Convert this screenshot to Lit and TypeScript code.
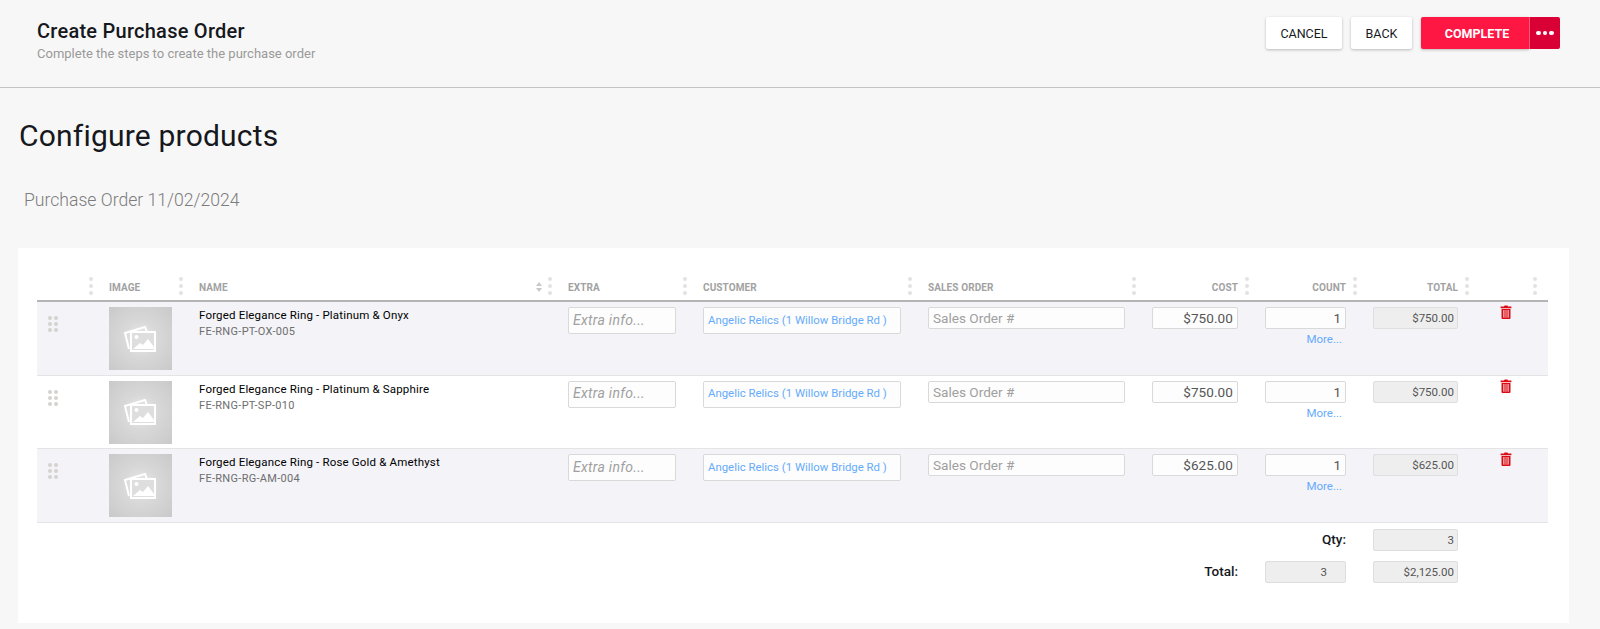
import { LitElement, html, css, svg } from "lit";
import { customElement } from "lit/decorators.js";

const rows = [
  { name: "Forged Elegance Ring - Platinum & Onyx", sku: "FE-RNG-PT-OX-005", cost: "$750.00" },
  { name: "Forged Elegance Ring - Platinum & Sapphire", sku: "FE-RNG-PT-SP-010", cost: "$750.00" },
  { name: "Forged Elegance Ring - Rose Gold & Amethyst", sku: "FE-RNG-RG-AM-004", cost: "$625.00" },
];

const photoIcon = svg`<svg class="photo" viewBox="0 0 34 30" width="34" height="30" fill="none" stroke="#fff" stroke-width="2">
  <path d="M6 25 2 9l20-6 2 5"/>
  <rect x="8" y="8" width="24" height="19" fill="#dedede"/>
  <circle cx="13.5" cy="13" r="2" fill="#fff" stroke="none"/>
  <path d="M10 25l7-6 3 2 5-6 6 8v2z" fill="#fff" stroke="none"/>
</svg>`;

const trashIcon = svg`<svg viewBox="0 0 12 14" width="12" height="14">
  <path d="M4 1.6 4.6.6h2.8L8 1.6h3.4v1.6H.6V1.6z" fill="#dd0a14"/>
  <path d="M1.5 4h9v9a1 1 0 0 1-1 1h-7a1 1 0 0 1-1-1z" fill="#dd0a14"/>
  <path d="M3 5h6v7.6H3z" fill="#ec9a9e"/>
  <path d="M4.6 5h.8v7.6h-.8zM6.6 5h.8v7.6h-.8z" fill="#dd0a14"/>
</svg>`;

const heads: [string, string][] = [
  ["", ""], ["IMAGE", ""], ["NAME", "sortable"], ["EXTRA", ""], ["CUSTOMER", ""],
  ["SALES ORDER", ""], ["COST", "r"], ["COUNT", "r"], ["TOTAL", "r"], ["", "last"],
];

@customElement("app-root")
export class AppRoot extends LitElement {
  static styles = css`
    :host { display: block; min-height: 629px; background: #f7f7f7; font-family: Roboto, "Liberation Sans", sans-serif; color: #16181d; overflow: hidden; }
    * { box-sizing: border-box; }
    .top { height: 88px; border-bottom: 1px solid #c4c4c4; padding: 17px 40px 0 37px; display: flex; justify-content: space-between; align-items: flex-start; }
    .title { font-size: 20px; font-weight: 500; line-height: 26px; letter-spacing: 0.25px; margin-top: 1px; }
    .sub { font-size: 13px; line-height: 16px; color: #9a9a9a; margin-top: 2px; }
    .actions { display: flex; }
    .btn { height: 32px; display: flex; align-items: center; justify-content: center; background: #fff; font-size: 12.5px; font-weight: 400; border-radius: 2px; box-shadow: 0 1px 3px rgba(0,0,0,.25); margin-right: 9px; }
    .cancel { width: 76px; }
    .back { width: 61px; }
    .complete { width: 108px; background: #ff1744; color: #fff; font-weight: 700; margin-right: 0; border-radius: 2px 0 0 2px; padding-left: 4px; }
    .more { width: 31px; background: #d90035; margin-right: 0; border-radius: 0 2px 2px 0; gap: 2px; border-left: 1px solid #ff5a78; box-shadow: none; }
    .more i { width: 4.5px; height: 4.5px; border-radius: 50%; background: #fff; }
    h1 { font-size: 30px; font-weight: 400; line-height: 40px; margin: 28px 0 0 19px; letter-spacing: 0.2px; }
    h2 { font-size: 17.6px; font-weight: 300; line-height: 24px; color: #7c7c7c; margin: 32px 0 0 24px; }
    .card { margin: 36px 31px 0 18px; height: 375px; background: #fff; padding: 27px 21px 0 19px; }
    .grid { display: grid; grid-template-columns: 72px 90px 369px 135px 225px 224px 113px 108px 112px 63px; }
    .head { height: 27px; border-bottom: 2px solid #b4b4b4; }
    .hc { position: relative; font-size: 10px; font-weight: 700; color: #a2a2a2; line-height: 14px; padding-top: 6px; letter-spacing: 0.1px; }
    .hc.r { text-align: right; padding-right: 27px; }
    .grip { position: absolute; right: 16px; top: 2px; display: flex; flex-direction: column; gap: 3px; }
    .grip i { width: 4px; height: 4px; border-radius: 50%; background: #e2e2e2; }
    .hc.last .grip { right: 11px; }
    .sort { position: absolute; right: 26px; top: 7px; display: flex; flex-direction: column; gap: 2px; }
    .sort i { width: 0; height: 0; border-left: 3px solid transparent; border-right: 3px solid transparent; }
    .sort i:first-child { border-bottom: 4px solid #c8c8c8; }
    .sort i:last-child { border-top: 4px solid #c8c8c8; }
    .row { height: 73.5px; border-bottom: 1px solid #e4e4e4; padding-top: 5px; }
    .row.odd { background: #f3f3f8; }
    .drag { display: grid; grid-template-columns: 4px 4px; gap: 2px; width: 10px; margin: 9px 0 0 11px; align-content: start; }
    .drag i { width: 4px; height: 4px; border-radius: 50%; background: #d4d3d0; }
    .thumb { width: 63px; height: 63px; background: radial-gradient(circle, #ebebeb 0%, #d8d8d8 40%, #c9c9c9 100%); display: flex; align-items: center; justify-content: center; padding-right: 2px; }
    .name { font-size: 11.5px; font-weight: 400; color: #000; line-height: 16px; letter-spacing: 0.17px; }
    .sku { font-size: 11px; line-height: 16px; color: #6e6e6e; letter-spacing: 0.3px; margin-top: 1px; }
    .box { background: #fdfdfd; border: 1px solid #d9d9d9; border-radius: 2px; display: flex; align-items: center; font-size: 14px; padding: 0 4px; white-space: nowrap; }
    .tall { height: 27px; }
    .short { height: 22px; }
    .extra { width: 108px; color: #a0a0a0; font-style: italic; letter-spacing: 0.3px; padding-bottom: 2px; }
    .cust { width: 198px; color: #66abfb; font-size: 11.4px; padding-bottom: 2px; }
    .sales { width: 197px; color: #a0a0a0; font-size: 13.6px; }
    .cost { width: 86px; justify-content: flex-end; color: #555; font-size: 13.5px; letter-spacing: 0.1px; }
    .count { width: 81px; justify-content: flex-end; color: #555; font-size: 13.5px; }
    .link { width: 81px; text-align: right; font-size: 11.5px; line-height: 14px; color: #66abfb; margin-top: 3px; padding-right: 4px; }
    .ro { width: 85px; background: #eee; justify-content: flex-end; font-size: 11.5px; color: #555; padding-right: 3px; border-color: #dedede; }
    .del { padding: 0 0 0 15px; margin-top: -3px; }
    .foot { height: 38px; padding-top: 6px; }
    .foot.b { height: 33px; padding-top: 0; }
    .lab { font-size: 13.5px; font-weight: 500; text-align: right; line-height: 20px; }
    .lab.qty { grid-column: 8; padding-right: 27px; }
    .lab.tot { grid-column: 7; padding-right: 27px; }
    .ro.c { width: 81px; padding-right: 18px; }
  `;

  private dots(n: number, cls: string) {
    return html`<span class=${cls}>${Array.from({ length: n }, () => html`<i></i>`)}</span>`;
  }

  render() {
    return html`
      <div class="top">
        <div>
          <div class="title">Create Purchase Order</div>
          <div class="sub">Complete the steps to create the purchase order</div>
        </div>
        <div class="actions">
          <div class="btn cancel">CANCEL</div>
          <div class="btn back">BACK</div>
          <div class="btn complete">COMPLETE</div>
          <div class="btn more"><i></i><i></i><i></i></div>
        </div>
      </div>
      <h1>Configure products</h1>
      <h2>Purchase Order 11/02/2024</h2>
      <div class="card">
        <div class="grid head">
          ${heads.map(([t, k]) => html`<div class="hc ${k}">${t}
            ${k === "sortable" ? html`<span class="sort"><i></i><i></i></span>` : ""}
            ${this.dots(3, "grip")}</div>`)}
        </div>
        ${rows.map((r, i) => html`
          <div class="grid row ${i % 2 === 0 ? "odd" : ""}">
            <div>${this.dots(6, "drag")}</div>
            <div class="thumb">${photoIcon}</div>
            <div><div class="name">${r.name}</div><div class="sku">${r.sku}</div></div>
            <div><div class="box tall extra">Extra info...</div></div>
            <div><div class="box tall cust">Angelic Relics (1 Willow Bridge Rd )</div></div>
            <div><div class="box short sales">Sales Order #</div></div>
            <div><div class="box short cost">${r.cost}</div></div>
            <div><div class="box short count">1</div><div class="link">More...</div></div>
            <div><div class="box short ro">${r.cost}</div></div>
            <div class="del">${trashIcon}</div>
          </div>`)}
        <div class="grid foot">
          <div class="lab qty">Qty:</div>
          <div class="box short ro">3</div>
        </div>
        <div class="grid foot b">
          <div class="lab tot">Total:</div>
          <div class="box short ro c">3</div>
          <div class="box short ro">$2,125.00</div>
        </div>
      </div>
    `;
  }
}
